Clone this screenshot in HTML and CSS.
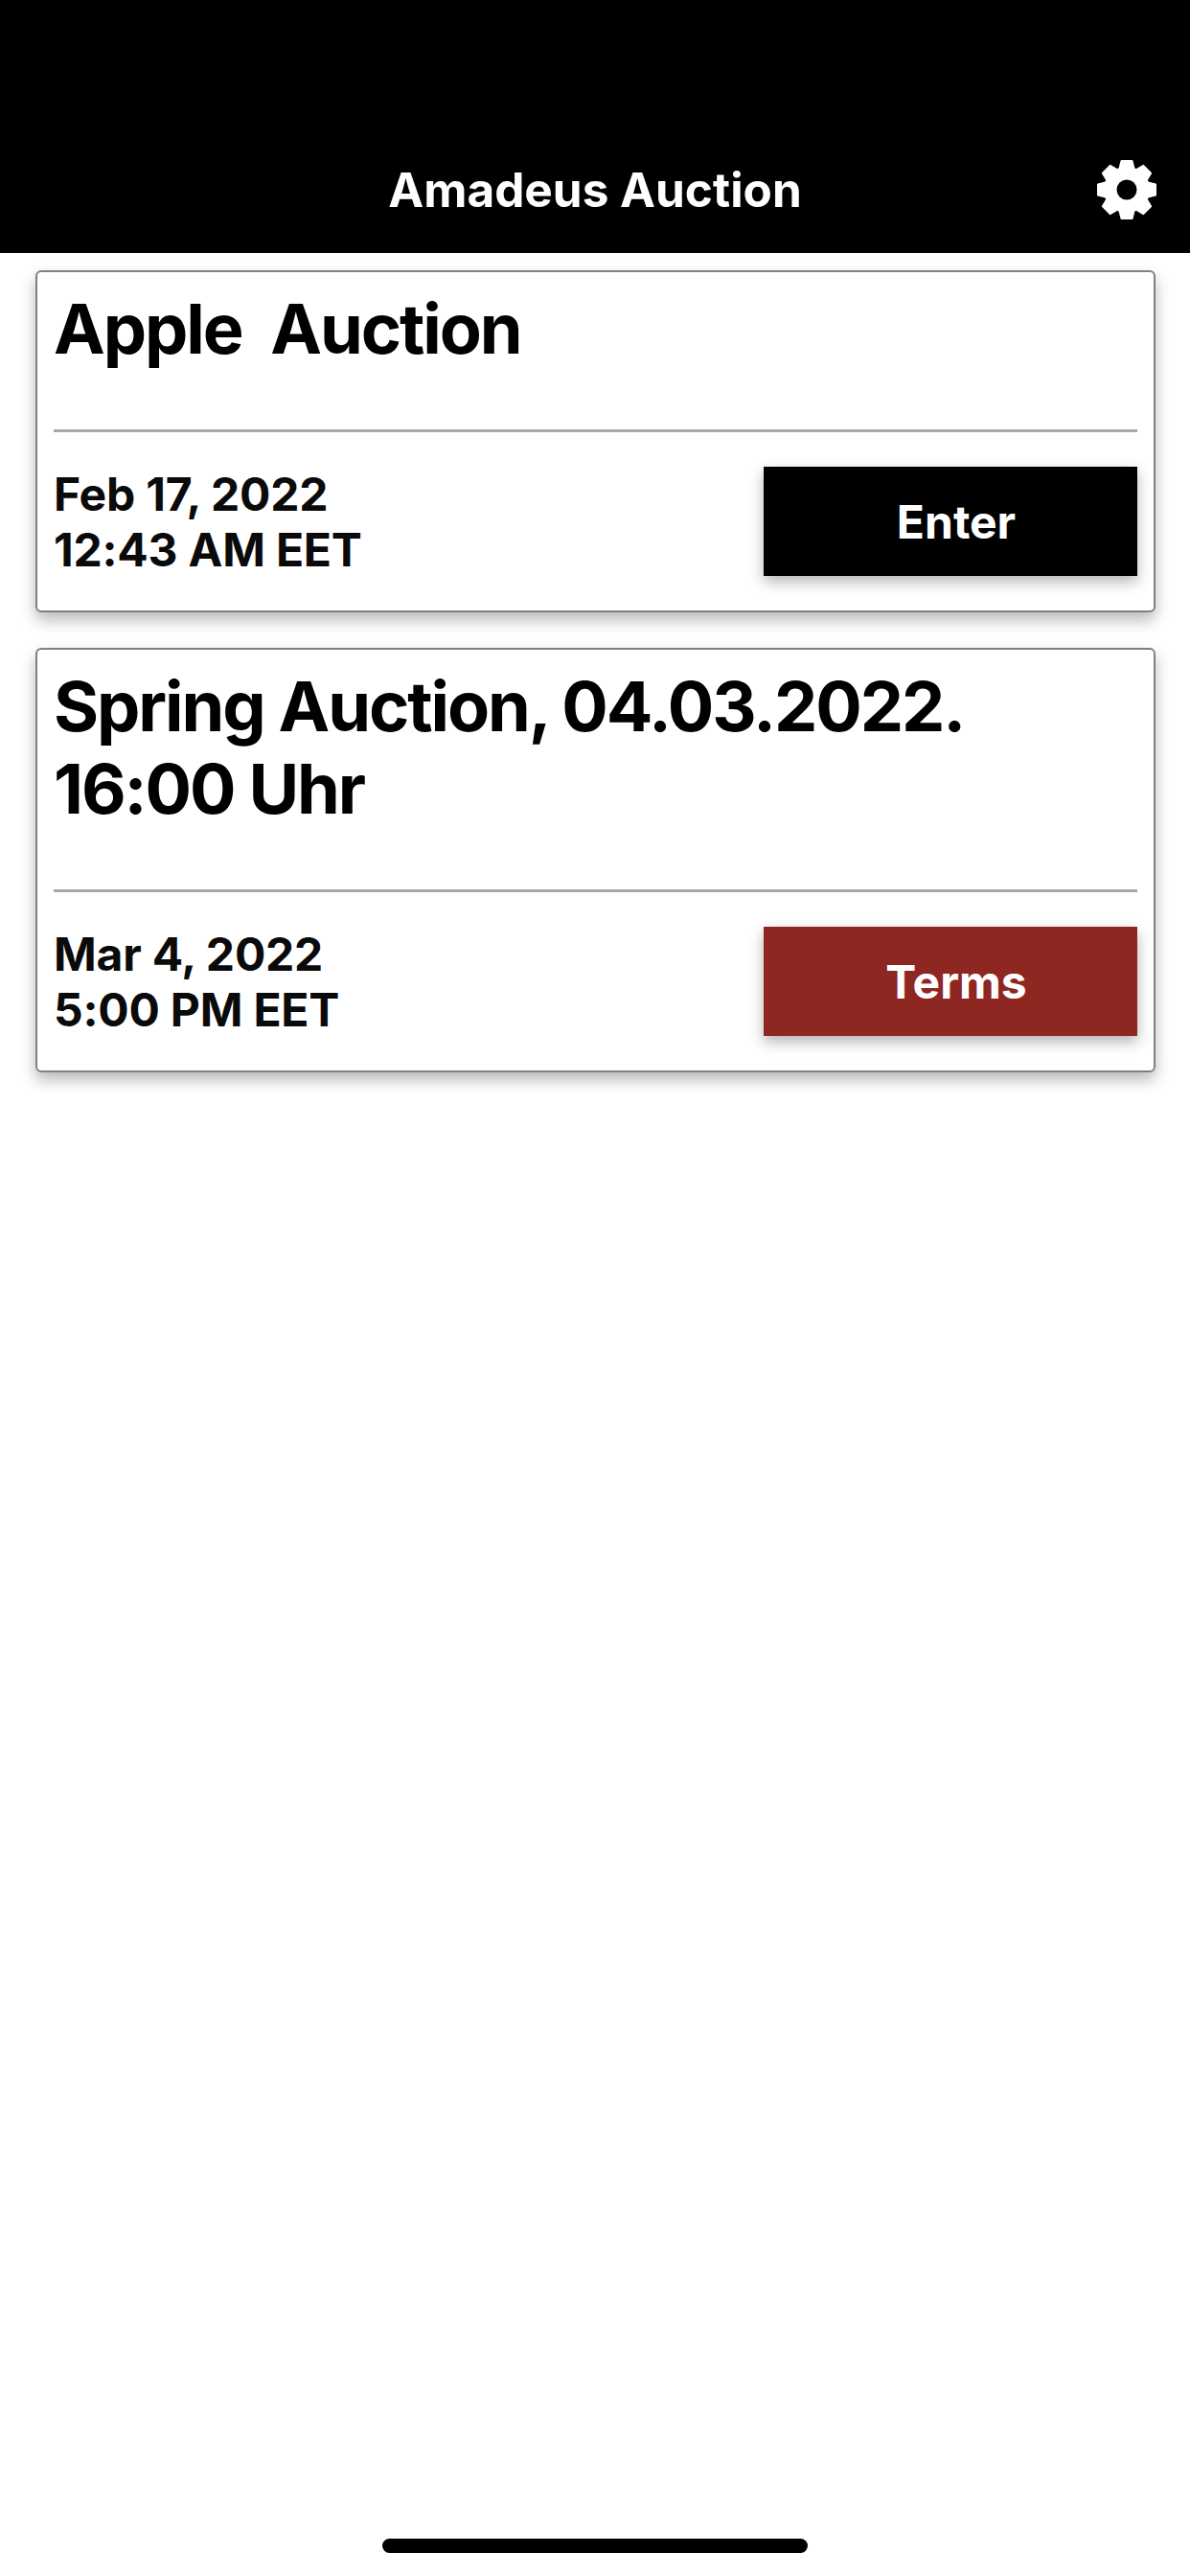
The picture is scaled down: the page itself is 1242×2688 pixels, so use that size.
FILE: index.html
```html
<!DOCTYPE html>
<html lang="en">
<head>
<meta charset="utf-8">
<title>Amadeus Auction</title>
<link rel="stylesheet" href="styles.css">
</head>
<body>
<div class="app">
  <header class="topbar">
    <h1 class="topbar-title">Amadeus Auction</h1>
    <svg class="gear" viewBox="-32 -32 64 64" aria-hidden="true">
      <defs>
        <path id="tooth" d="M-5.5 -30H5.5L8 -20H-8Z"/>
      </defs>
      <g class="gear-shape">
        <use href="#tooth"/>
        <use href="#tooth" transform="rotate(45)"/>
        <use href="#tooth" transform="rotate(90)"/>
        <use href="#tooth" transform="rotate(135)"/>
        <use href="#tooth" transform="rotate(180)"/>
        <use href="#tooth" transform="rotate(225)"/>
        <use href="#tooth" transform="rotate(270)"/>
        <use href="#tooth" transform="rotate(315)"/>
        <circle r="23"/>
      </g>
      <circle class="gear-hole" r="10.5"/>
    </svg>
  </header>
  <main class="list">
    <article class="card">
      <h2 class="card-title">Apple&nbsp; Auction</h2>
      <hr class="rule">
      <div class="card-foot">
        <p class="when">Feb 17, 2022<br>12:43 AM EET</p>
        <a class="btn btn-black">Enter</a>
      </div>
    </article>
    <article class="card">
      <h2 class="card-title">Spring Auction, 04.03.2022.<br>16:00 Uhr</h2>
      <hr class="rule">
      <div class="card-foot">
        <p class="when">Mar 4, 2022<br>5:00 PM EET</p>
        <a class="btn btn-red">Terms</a>
      </div>
    </article>
  </main>
  <div class="home-wrap"><div class="home-bar"></div></div>
</div>
</body>
</html>
```
FILE: styles.css
```css
* { box-sizing: border-box; }
html, body { margin: 0; padding: 0; background: #fff; }
body { font-family: Inter, "Liberation Sans", sans-serif; color: #000; }
.app { width: 1242px; height: 2688px; display: flex; flex-direction: column; }
.topbar {
  height: 264px; background: #000; position: relative;
  display: flex; align-items: flex-end; justify-content: center; padding-bottom: 38px;
  flex: none;
}
.topbar-title { margin: 0; color: #fff; font-size: 49.5px; line-height: 56px; font-weight: 700; }
.gear { position: absolute; left: 1144px; top: 166px; width: 64px; height: 64px; }
.gear-shape { fill: #fff; stroke: #fff; stroke-width: 2; stroke-linejoin: round; }
.gear-hole { fill: #000; }
.list { flex: 1; padding: 18px 36px 0 37px; display: flex; flex-direction: column; gap: 37px; }
.card {
  border: 2px solid #808080; border-radius: 6px; background: #fff;
  box-shadow: 0 8px 16px rgba(0,0,0,.28);
  padding: 16px 17px 34px 17px;
}
.card-title { margin: 0; font-size: 72px; line-height: 86px; font-weight: 700; letter-spacing: -2.1px; }
.rule { border: 0; height: 3px; background: #a8a8a8; margin: 62px 0 0; }
.card-foot { display: flex; justify-content: space-between; align-items: flex-start; padding-top: 36px; }
.when { margin: 0; font-size: 48px; line-height: 58px; font-weight: 700; letter-spacing: -0.2px; color: #0a0a0a; }
.btn {
  width: 390px; height: 114px; display: flex; align-items: center; justify-content: center;
  padding-left: 12px;
  color: #fff; font-size: 48px; font-weight: 700;
  box-shadow: 0 6px 14px rgba(0,0,0,.3);
}
.btn-black { background: #000; }
.btn-red { background: #8e2722; }
.home-wrap { height: 39px; display: flex; justify-content: center; flex: none; }
.home-bar { width: 444px; height: 15px; border-radius: 8px; background: #000; }
```
